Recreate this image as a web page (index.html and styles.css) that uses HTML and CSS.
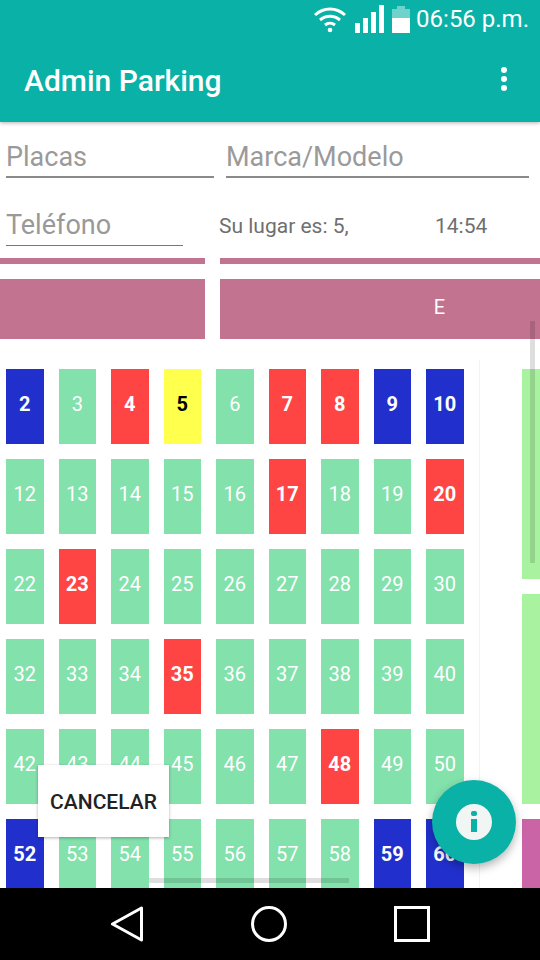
FILE: index.html
```html
<!DOCTYPE html>
<html lang="es">
<head>
  <meta charset="UTF-8" />
  <meta name="viewport" content="width=device-width, initial-scale=1.0" />
  <title>Admin Parking</title>
  <link rel="stylesheet" href="styles.css">
</head>
<body>
  <div class="screen">
    <header class="appbar">
      <div class="status">
        <svg class="wifi" width="34" height="30" viewBox="0 0 34 30">
          <g fill="none" stroke="#fff" stroke-width="3">
            <path d="M2 11C11 3 23 3 32 11" />
            <path d="M7 16C13 11 21 11 27 16" />
            <path d="M12 21C15 18.500 19 18.500 22 21" />
          </g>
          <circle cx="17" cy="26" r="2.300" fill="#fff" />
        </svg>
        <svg class="signal" width="30" height="30" viewBox="0 0 30 30">
          <g fill="#fff">
            <rect x="0" y="19" width="5" height="10" />
            <rect x="8" y="14" width="5" height="15" />
            <rect x="16" y="8" width="5" height="21" />
            <rect x="24" y="1" width="5" height="28" />
          </g>
        </svg>
        <svg class="battery" width="19" height="30" viewBox="0 0 19 30">
          <path d="M5 5V2H13V5H18V14H0V5Z" fill="#6fd2cb" />
          <rect x="0" y="14" width="18" height="15" fill="#fff" />
        </svg>
        <span class="clock">06:56 p.m.</span>
      </div>
      <div class="toolbar">
        <h1>Admin Parking</h1>
        <div class="menu"><i></i><i></i><i></i></div>
      </div>
    </header>

    <main class="content">
      <div class="form-row first">
        <div class="field placas">Placas</div>
        <div class="field marca">Marca/Modelo</div>
      </div>
      <div class="form-row second">
        <div class="field telefono">Teléfono</div>
        <div class="lugar"><span class="lugar-text">Su lugar es: 5,</span><span>14:54</span></div>
      </div>

      <div class="bands thin"><div></div><div></div></div>
      <div class="bands thick"><div></div><div>E</div></div>

      <div class="lot">
        <div class="grid">
          <div class="spot blue">2</div><div class="spot">3</div><div class="spot red">4</div><div class="spot yellow">5</div><div class="spot">6</div><div class="spot red">7</div><div class="spot red">8</div><div class="spot blue">9</div><div class="spot blue">10</div>
          <div class="spot">12</div><div class="spot">13</div><div class="spot">14</div><div class="spot">15</div><div class="spot">16</div><div class="spot red">17</div><div class="spot">18</div><div class="spot">19</div><div class="spot red">20</div>
          <div class="spot">22</div><div class="spot red">23</div><div class="spot">24</div><div class="spot">25</div><div class="spot">26</div><div class="spot">27</div><div class="spot">28</div><div class="spot">29</div><div class="spot">30</div>
          <div class="spot">32</div><div class="spot">33</div><div class="spot">34</div><div class="spot red">35</div><div class="spot">36</div><div class="spot">37</div><div class="spot">38</div><div class="spot">39</div><div class="spot">40</div>
          <div class="spot">42</div><div class="spot">43</div><div class="spot">44</div><div class="spot">45</div><div class="spot">46</div><div class="spot">47</div><div class="spot red">48</div><div class="spot">49</div><div class="spot">50</div>
          <div class="spot blue">52</div><div class="spot">53</div><div class="spot">54</div><div class="spot">55</div><div class="spot">56</div><div class="spot">57</div><div class="spot">58</div><div class="spot blue">59</div><div class="spot blue">60</div>
        </div>
        <div class="side">
          <div class="lane tall"></div>
          <div class="lane tall"></div>
          <div class="lane purple"></div>
        </div>
      </div>

      <div class="scroll-v"></div>
      <div class="scroll-h"></div>
      <button class="cancel">CANCELAR</button>
      <div class="fab">
        <div class="fab-dot">
          <i class="dot"></i>
          <i class="stem"></i>
        </div>
      </div>
    </main>

    <nav class="navbar">
      <svg width="34" height="36" viewBox="0 0 34 36"><path d="M31.500 2V34L2.500 18Z" fill="none" stroke="#fff" stroke-width="3" stroke-linejoin="round" /></svg>
      <svg width="36" height="36" viewBox="0 0 36 36"><circle cx="18" cy="18" r="16.500" fill="none" stroke="#fff" stroke-width="3" /></svg>
      <svg width="36" height="36" viewBox="0 0 36 36"><rect x="1.500" y="1.500" width="33" height="33" fill="none" stroke="#fff" stroke-width="3" /></svg>
    </nav>
  </div>
</body>
</html>
```

FILE: styles.css
```css
* {
  box-sizing: border-box;
}
body {
  margin: 0;
  font-family: Roboto, "Liberation Sans", sans-serif;
  background: #fff;
}
.screen {
  width: 540px;
  height: 960px;
  display: flex;
  flex-direction: column;
  overflow: hidden;
}

.appbar {
  height: 122px;
  background: #0ab1a7;
  box-shadow: 0 1px 4px rgba(0, 0, 0, 0.3);
  color: #fff;
  flex-shrink: 0;
  position: relative;
  z-index: 2;
}
.status {
  height: 38px;
  padding: 4px 11px 0 0;
  display: flex;
  justify-content: flex-end;
  align-items: flex-start;
}
.wifi {
  margin-right: 8px;
}
.signal {
  margin-right: 7px;
}
.battery {
  margin-right: 5px;
}
.clock {
  font-size: 24px;
  line-height: 30px;
}
.toolbar {
  height: 84px;
  padding: 0 33px 0 24px;
  display: flex;
  align-items: center;
  justify-content: space-between;
}
.toolbar h1 {
  margin: 0;
  font-size: 30px;
  font-weight: 500;
}
.menu {
  display: flex;
  flex-direction: column;
  gap: 3px;
  margin-bottom: 2px;
}
.menu i {
  width: 6px;
  height: 6px;
  border-radius: 50%;
  background: #fff;
}

.content {
  flex: 1;
  position: relative;
  overflow: hidden;
}
.form-row {
  display: flex;
  color: #9a9a9a;
}
.first {
  height: 56px;
  padding: 0 0 0 6px;
}
.second {
  height: 68px;
  padding: 0 0 0 6px;
  align-items: flex-start;
}
.field {
  font-size: 27px;
  line-height: 30px;
  padding-top: 20px;
  border-bottom: 2px solid #8a8a8a;
}
.placas {
  width: 208px;
  height: 56px;
}
.marca {
  width: 303px;
  height: 56px;
  margin-left: 12px;
}
.telefono {
  width: 177px;
  height: 68px;
  padding-top: 32px;
  border-bottom-width: 1px;
  border-bottom-color: #777;
  color: #999;
}
.lugar {
  margin: 36px 0 0 36px;
  color: #6f6f6f;
  font-size: 21px;
  line-height: 24px;
  display: flex;
}
.lugar-text {
  width: 216px;
}

.bands {
  display: flex;
  gap: 15px;
}
.bands div {
  background: #c1738f;
}
.bands div:first-child {
  width: 205px;
}
.bands div:last-child {
  flex: 1;
}
.thin {
  margin-top: 12px;
  height: 6px;
}
.thick {
  margin-top: 15px;
  height: 60px;
  color: #fff;
  font-size: 20px;
  line-height: 56px;
  text-align: center;
}
.thick div:last-child {
  padding-left: 119px;
}

.lot {
  margin-top: 30px;
  padding-left: 6px;
  display: flex;
}
.grid {
  display: grid;
  grid-template-columns: repeat(9, 37.5px);
  grid-auto-rows: 75px;
  gap: 15px;
  width: 474px;
  height: 525px;
}
.spot {
  background: #83e1ac;
  color: #fff;
  font-size: 20px;
  padding-bottom: 5px;
  display: flex;
  align-items: center;
  justify-content: center;
}
.spot.red {
  background: #ff4444;
  font-weight: 700;
}
.spot.blue {
  background: #2130cd;
  font-weight: 700;
}
.spot.yellow {
  background: #ffff4d;
  color: #000;
  font-weight: 700;
}
.side {
  margin-left: 42px;
  width: 18px;
  display: flex;
  flex-direction: column;
  gap: 15px;
  flex-shrink: 0;
}
.lane {
  background: #a9f3a0;
  flex-shrink: 0;
}
.lane.tall {
  height: 210px;
}
.lane.purple {
  height: 75px;
  background: #cb63a7;
}
.lot::after {
  content: "";
  position: absolute;
  left: 479px;
  top: 238px;
  width: 1px;
  height: 528px;
  background: #f3f3f3;
}

.scroll-v {
  position: absolute;
  left: 530px;
  top: 199px;
  width: 5px;
  height: 242px;
  background: rgba(0, 0, 0, 0.13);
}
.scroll-h {
  position: absolute;
  left: 149px;
  top: 756px;
  width: 200px;
  height: 5px;
  background: rgba(0, 0, 0, 0.13);
}
.cancel {
  position: absolute;
  left: 38px;
  top: 643px;
  width: 131px;
  height: 72px;
  padding: 2px 0 0;
  border: none;
  background: #fff;
  color: #222;
  font-family: inherit;
  font-size: 21px;
  font-weight: 500;
  box-shadow: 0 1px 3px rgba(0, 0, 0, 0.3);
}
.fab {
  position: absolute;
  left: 432px;
  top: 658px;
  width: 84px;
  height: 84px;
  border-radius: 50%;
  background: #0ab1a7;
  box-shadow: 0 4px 10px rgba(0, 0, 0, 0.3);
  display: flex;
  align-items: center;
  justify-content: center;
}
.fab-dot {
  width: 36px;
  height: 36px;
  border-radius: 50%;
  background: #f1f6f5;
  display: flex;
  flex-direction: column;
  align-items: center;
  padding-top: 7px;
  gap: 3px;
}
.dot {
  width: 6px;
  height: 5px;
  background: #0ab1a7;
  border-radius: 2px;
}
.stem {
  width: 6px;
  height: 13px;
  background: #0ab1a7;
}

.navbar {
  height: 72px;
  background: #000;
  flex-shrink: 0;
  display: flex;
  align-items: center;
  padding: 0 0 0 110px;
  gap: 107px;
}
```
